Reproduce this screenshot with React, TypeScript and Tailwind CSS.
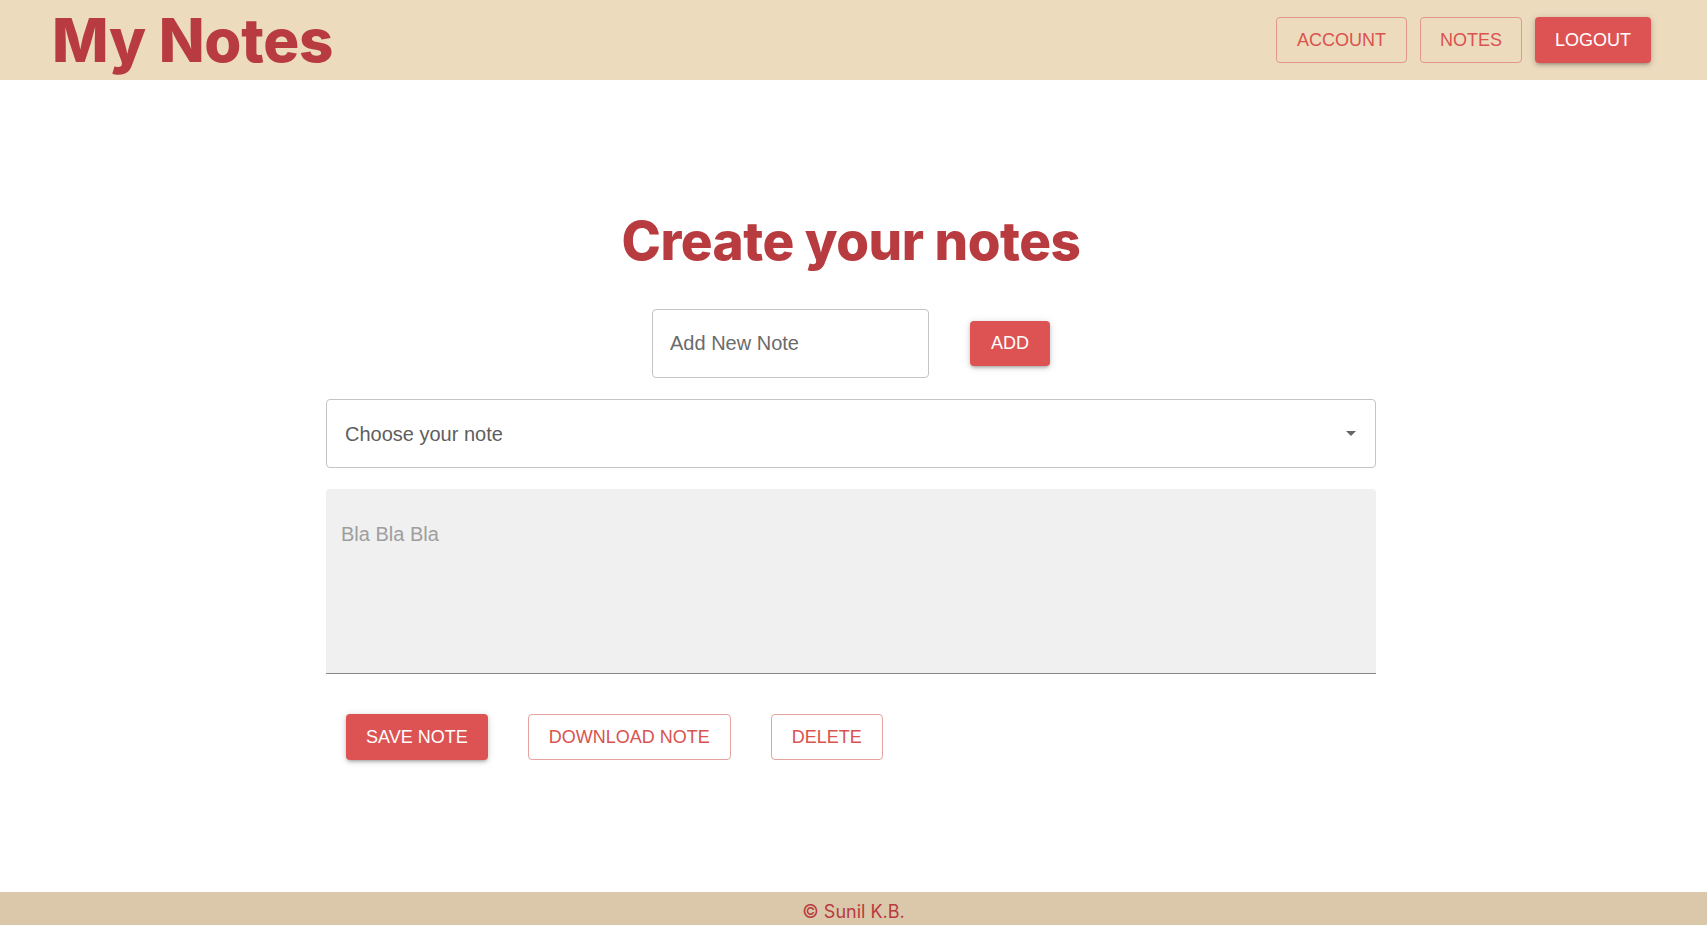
import React from 'react';

const headFont = { fontFamily: 'Inter, "Open Sans", sans-serif' };

export default function App() {
  return (
    <div className="min-h-screen flex flex-col bg-white" style={{ fontFamily: '"Liberation Sans", Arial, sans-serif' }}>
      {/* Top bar */}
      <header className="h-[80px] bg-[#ecdbbd] flex items-center justify-between pl-[52px] pr-[56px]">
        <h1 className="text-[60px] leading-none font-extrabold text-[#b83b3f] tracking-[-0.3px]" style={headFont}>
          My Notes
        </h1>
        <nav className="flex items-center gap-[13px]">
          <button className="h-[46px] px-[20px] rounded-[4px] border border-[#e3968c] text-[#d9534f] text-[18px] uppercase">
            Account
          </button>
          <button className="h-[46px] px-[19px] rounded-[4px] border border-[#e3968c] text-[#d9534f] text-[18px] uppercase">
            Notes
          </button>
          <button className="h-[46px] px-[20px] rounded-[4px] bg-[#dd5353] text-white text-[18px] uppercase shadow-[0_3px_3px_-2px_rgba(0,0,0,0.2),0_2px_4px_0_rgba(0,0,0,0.14),0_1px_8px_0_rgba(0,0,0,0.12)]">
            Logout
          </button>
        </nav>
      </header>

      {/* Editor */}
      <main className="flex-1 flex flex-col items-center pr-[5px]">
        <h2 className="mt-[135px] text-[53px] leading-none font-extrabold text-[#b83b3f] tracking-[-0.5px]" style={headFont}>
          Create your notes
        </h2>

        <div className="mt-[41px] flex items-center gap-[41px]">
          <input
            placeholder="Add New Note"
            className="w-[277px] h-[69px] px-[17px] rounded-[4px] border border-[#c4c4c4] text-[20px] text-[#333] placeholder:text-[#6b6b6b] outline-none"
          />
          <button className="h-[45px] px-[21px] rounded-[4px] bg-[#dd5353] text-white text-[18px] shadow-[0_3px_3px_-2px_rgba(0,0,0,0.2),0_2px_4px_0_rgba(0,0,0,0.14),0_1px_8px_0_rgba(0,0,0,0.12)]">
            ADD
          </button>
        </div>

        <div className="w-[1050px] mt-[21px] flex flex-col">
          <div className="h-[69px] rounded-[4px] border border-[#c4c4c4] flex items-center justify-between pl-[18px] pr-[19px]">
            <span className="text-[20px] text-[#5e5e5e]">Choose your note</span>
            <svg width="10" height="5" viewBox="0 0 10 5">
              <path d="M0 0h10L5 5z" fill="#666" />
            </svg>
          </div>

          <textarea
            placeholder="Bla Bla Bla"
            className="mt-[21px] h-[185px] resize-none rounded-t-[4px] bg-[#f0f0f0] border-b border-[#8a8a8a] px-[15px] pt-[33px] text-[20px] leading-[24px] text-[#333] placeholder:text-[#9e9e9e] outline-none"
          />

          <div className="mt-[40px] pl-[20px] flex items-center gap-[40px]">
            <button className="h-[46px] px-[20px] rounded-[4px] bg-[#dd5353] text-white text-[18px] shadow-[0_3px_3px_-2px_rgba(0,0,0,0.2),0_2px_4px_0_rgba(0,0,0,0.14),0_1px_8px_0_rgba(0,0,0,0.12)]">
              SAVE NOTE
            </button>
            <button className="h-[46px] px-[20px] rounded-[4px] border border-[#e6a3a0] text-[#d9534f] text-[18px]">
              DOWNLOAD NOTE
            </button>
            <button className="h-[46px] px-[20px] rounded-[4px] border border-[#e6a3a0] text-[#d9534f] text-[18px]">
              DELETE
            </button>
          </div>
        </div>
      </main>

      <footer className="h-[33px] pt-[5px] bg-[#dbc7a9] flex items-center justify-center">
        <span className="text-[18px] font-normal text-[#b83b3f]" style={headFont}>© Sunil K.B.</span>
      </footer>
    </div>
  );
}
